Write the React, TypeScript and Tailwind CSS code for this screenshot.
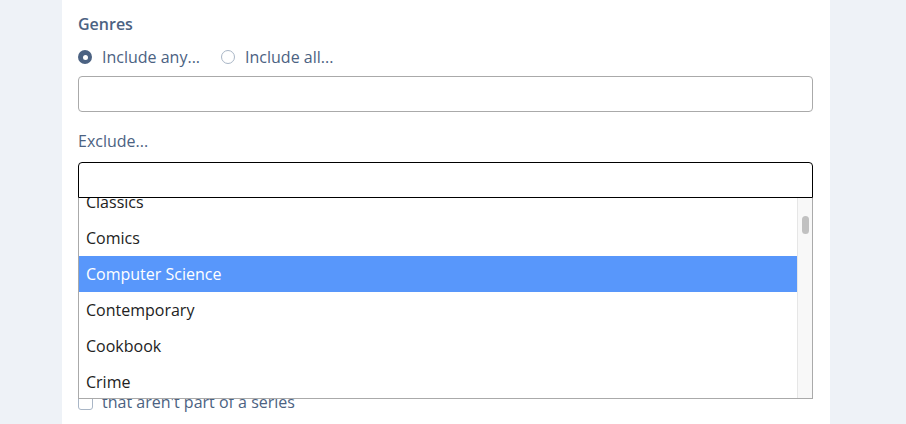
import React from 'react';

const genres = ['Classics', 'Comics', 'Computer Science', 'Contemporary', 'Cookbook', 'Crime', 'Fantasy'];

const Radio = ({ checked, label }: { checked?: boolean; label: string }) => (
  <label className="flex items-center gap-[10px]">
    {checked ? (
      <span className="w-[14px] h-[14px] rounded-full bg-[#4b6282] flex items-center justify-center">
        <span className="w-[5px] h-[5px] rounded-full bg-white" />
      </span>
    ) : (
      <span className="w-[14px] h-[14px] rounded-full border border-[#a9b6c6] bg-white" />
    )}
    <span>{label}</span>
  </label>
);

export default function App() {
  return (
    <div className="min-h-[424px] h-[424px] overflow-hidden bg-[#eef2f7] font-['Open_Sans',sans-serif]">
      <div className="ml-[62px] w-[768px] h-full bg-white pl-[16px] pr-[17px] pt-[12px]">
        <div className="text-[16px] leading-6 font-semibold text-[#4b6282]">Genres</div>

        <div className="mt-[9px] flex items-center gap-[21px] text-[16px] leading-6 text-[#4b6282]">
          <Radio checked label="Include any..." />
          <Radio label="Include all..." />
        </div>

        <div className="mt-[7px] h-[36px] rounded-[4px] border border-[#aaaaaa] bg-white" />

        <div className="mt-[17px] text-[16px] leading-6 text-[#4b6282]">Exclude...</div>

        <div className="relative mt-[9px]">
          <div className="h-[36px] rounded-t-[4px] border border-black bg-white" />

          {/* dropdown */}
          <div className="absolute left-0 right-0 top-[36px] z-10 h-[201px] border border-t-0 border-[#aaaaaa] bg-white flex overflow-hidden">
            <div className="flex-1 overflow-hidden">
              <ul className="-mt-[14px]">
                {genres.map((g) => (
                  <li
                    key={g}
                    className={`h-[36px] flex items-center pl-[7px] text-[16px] ${
                      g === 'Computer Science' ? 'bg-[#5897fb] text-white' : 'text-[#222]'
                    }`}
                  >
                    {g}
                  </li>
                ))}
              </ul>
            </div>
            <div className="relative w-[15px] bg-[#f8f8f8] border-l border-[#e6e6e6]">
              <div className="absolute left-[4px] top-[18px] w-[7px] h-[18px] rounded-full bg-[#c1c1c1]" />
            </div>
          </div>

          {/* content hidden behind dropdown */}
          <div className="h-[192px]" />
          <label className="flex items-center gap-[9px] text-[16px] leading-6 text-[#4b6282]">
            <span className="w-[15px] h-[15px] rounded-[3px] border border-[#a9b6c6] bg-white" />
            <span>that aren't part of a series</span>
          </label>
        </div>
      </div>
    </div>
  );
}
